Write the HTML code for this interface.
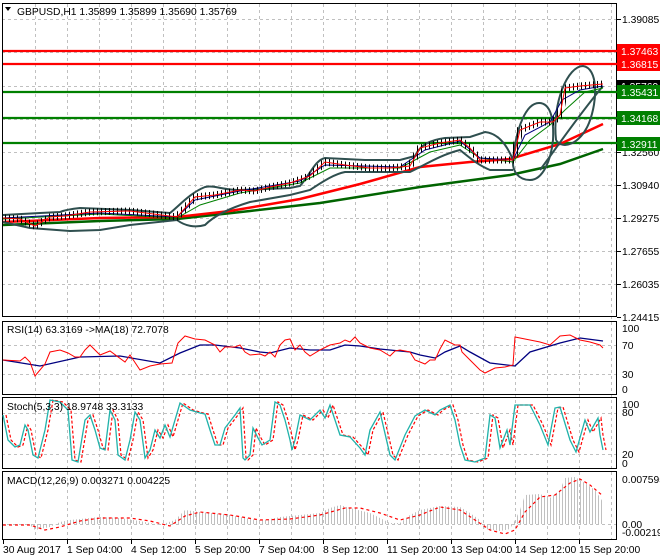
<!DOCTYPE html>
<html><head><meta charset="utf-8"><style>
html,body{margin:0;padding:0;background:#fff;}
svg{display:block;font-family:"Liberation Sans",sans-serif;font-size:10.3px;}
</style></head><body>
<svg width="660" height="560" viewBox="0 0 660 560" xmlns="http://www.w3.org/2000/svg">
<defs>
<pattern id="hp" width="3" height="10" patternUnits="userSpaceOnUse"><rect x="1" y="0" width="1" height="10" fill="#c0c0c0"/></pattern>
<pattern id="cp" width="4" height="10" patternUnits="userSpaceOnUse"><rect x="1" y="0" width="1" height="10" fill="#000"/></pattern>
</defs>
<rect width="660" height="560" fill="#fff"/>
<g stroke="#c0c0c0" stroke-dasharray="3,3" stroke-width="1">
<path d="M35.5 4V540M67.5 4V540M99.5 4V540M131.5 4V540M163.5 4V540M195.5 4V540M227.5 4V540M259.5 4V540M291.5 4V540M323.5 4V540M355.5 4V540M387.5 4V540M419.5 4V540M451.5 4V540M483.5 4V540M515.5 4V540M547.5 4V540M579.5 4V540M611.5 4V540"/>
<path d="M2 19.5H617M2 52.5H617M2 86.5H617M2 119.5H617M2 152.5H617M2 185.5H617M2 218.5H617M2 251.5H617M2 284.5H617"/>
<path d="M2 345.5H617M2 374.5H617M2 413.5H617M2 454.5H617M2 524.5H617"/>
</g>
<g fill="none" stroke="#000" stroke-width="1">
<rect x="2.5" y="3.5" width="614" height="313"/>
<rect x="2.5" y="321.5" width="614" height="73"/>
<rect x="2.5" y="397.5" width="614" height="71"/>
<rect x="2.5" y="471.5" width="614" height="68"/>
</g>
<g stroke-width="2.2">
<path d="M3 51H617" stroke="#ff0000"/>
<path d="M3 64H617" stroke="#ff0000"/>
<path d="M3 92H617" stroke="#008000"/>
<path d="M3 118H617" stroke="#008000"/>
<path d="M3 143H617" stroke="#008000"/>
</g>
<polyline fill="none" stroke="#006400" stroke-width="2.5" points="3,225 100,221 177,219 250,211 320,203 420,187 510,175 560,164 603,149"/>
<polyline fill="none" stroke="#ff0000" stroke-width="2.5" points="3,222 100,218 177,217 230,211 300,199 360,184 420,167 470,162 510,159 560,144 603,124"/>
<g fill="none" stroke="#2f4f4f" stroke-width="2">
<path d="M3 215 L40 213 L60 212 C65 210 70 209 80 208 L130 210 L170 213 C180 205 190 193 205 187 C215 185 222 190 240 190 L290 188 L300 186 C310 175 315 160 325 158 L365 160 L400 160 L415 156 C420 145 430 140 445 138 L470 137 L485 132 C495 133 505 140 513 160"/>
<path d="M3 222 L30 228 L70 231 L100 230 L130 225 L177 220 C185 226 195 228 205 225 C215 215 230 208 250 202 L290 195 L310 190 C325 180 335 174 345 172 L410 172 C425 165 440 155 460 150 C470 158 478 165 490 170 L513 170"/>
<path d="M513 160 C516 128 526 103 539 103 C551 103 554 120 553 140 C551 160 543 180 530 180 C519 180 512 172 513 160"/>
<path d="M556 140 C552 102 568 66 583 66 C598 68 598 100 589 123 C580 145 562 150 556 140"/>
<path d="M540 170 C555 150 575 120 603 86"/>
</g>
<polyline fill="none" stroke="#008000" stroke-width="1" points="3,219 100,214 177,218 200,205 240,193 300,183 330,168 400,168 430,152 460,145 480,158 513,162 530,140 550,125 565,110 585,92 603,88"/>
<polyline fill="none" stroke="#000080" stroke-width="1" points="3,218 100,213 177,217 195,200 240,191 300,181 325,165 400,167 425,150 460,141 480,158 513,160 525,135 550,122 562,100 580,90 603,86"/>
<polyline fill="none" stroke="url(#cp)" stroke-width="7" points="3,218 20,219 35,226 50,217 65,216 90,212 130,211 177,217 195,197 215,195 240,190 255,191 270,187 290,183 310,176 325,162 345,165 370,168 390,168 410,166 420,148 440,143 460,140 470,148 480,160 500,160 513,160 520,130 540,122 553,122 560,115 565,88 580,86 603,84"/>
<polyline fill="none" stroke="#ff0000" stroke-width="1" points="3,218 20,219 35,226 50,217 65,216 90,212 130,211 177,217 195,197 215,195 240,190 255,191 270,187 290,183 310,176 325,162 345,165 370,168 390,168 410,166 420,148 440,143 460,140 470,148 480,160 500,160 513,160 520,130 540,122 553,122 560,115 565,88 580,86 603,84"/>
<polyline fill="none" stroke="#000080" stroke-width="1.3" points="3,360 40,366 80,357 120,356 160,363 180,353 200,345 215,345 240,348 260,352 270,353 290,348 310,350 330,350 345,345 360,346 380,349 410,352 420,355 435,358 445,352 460,346 470,352 490,363 515,366 530,352 560,343 580,338 603,341"/>
<polyline fill="none" stroke="#ff0000" stroke-width="1" points="3,360 20,361 25,357 30,362 35,376 45,364 50,352 60,350 68,353 75,357 80,357 85,350 90,345 100,355 110,351 125,362 130,355 140,370 150,366 160,364 172,363 178,343 185,336 195,339 205,340 215,345 220,352 225,347 235,347 240,345 245,352 250,355 260,354 265,356 270,352 275,357 280,345 285,340 290,339 295,350 300,345 305,352 310,356 320,350 330,345 340,343 345,340 350,342 355,337 360,343 370,348 380,350 390,356 395,351 400,350 410,352 415,360 420,362 425,364 430,360 435,360 440,349 445,340 455,345 460,345 462,352 470,360 480,370 485,373 495,368 505,367 513,365 515,337 530,340 540,342 550,345 560,336 570,335 580,340 590,342 600,345 603,348"/>
<polyline fill="none" stroke="#ff0000" stroke-width="1.2" stroke-dasharray="3,2" transform="translate(3,0)" points="3,415 8,440 15,447 20,445 25,425 28,430 33,455 38,458 45,430 50,400 60,402 68,410 72,460 78,462 85,420 90,415 95,430 100,448 105,450 110,410 115,420 118,455 125,460 130,440 135,412 140,420 145,458 150,450 155,430 160,438 165,425 170,437 180,403 190,410 200,413 205,414 210,430 215,445 220,445 225,428 235,415 240,408 243,458 245,460 250,455 253,428 258,438 262,445 270,440 275,402 280,405 285,420 290,440 292,450 295,440 300,415 310,420 320,410 325,418 330,405 340,435 350,437 360,448 365,455 370,430 380,412 390,455 395,460 405,435 415,416 425,410 435,415 440,410 450,405 455,420 460,445 465,460 475,462 485,458 490,415 495,418 500,448 507,430 510,445 515,405 530,405 540,425 548,445 555,408 560,407 570,440 576,452 585,420 590,432 598,418 600,435 603,450"/>
<polyline fill="none" stroke="#20b2aa" stroke-width="1.3" points="3,415 8,440 15,447 20,445 25,425 28,430 33,455 38,458 45,430 50,400 60,402 68,410 72,460 78,462 85,420 90,415 95,430 100,448 105,450 110,410 115,420 118,455 125,460 130,440 135,412 140,420 145,458 150,450 155,430 160,438 165,425 170,437 180,403 190,410 200,413 205,414 210,430 215,445 220,445 225,428 235,415 240,408 243,458 245,460 250,455 253,428 258,438 262,445 270,440 275,402 280,405 285,420 290,440 292,450 295,440 300,415 310,420 320,410 325,418 330,405 340,435 350,437 360,448 365,455 370,430 380,412 390,455 395,460 405,435 415,416 425,410 435,415 440,410 450,405 455,420 460,445 465,460 475,462 485,458 490,415 495,418 500,448 507,430 510,445 515,405 530,405 540,425 548,445 555,408 560,407 570,440 576,452 585,420 590,432 598,418 600,435 603,450"/>
<polygon fill="url(#hp)" points="3,525 30,525 35,530 50,527 60,522 70,520 80,519 100,517 120,518 140,521 160,525 175,520 185,510 200,512 230,515 260,521 280,517 300,515 320,513 330,508 340,505 350,508 370,513 380,518 390,523 400,523 410,515 420,510 440,506 460,507 470,513 480,520 485,529 500,531 510,529 515,520 520,510 525,495 540,494 550,498 560,490 565,478 575,477 585,483 595,490 603,502 603,524 3,524"/>
<polyline fill="none" stroke="#ff0000" stroke-width="1.2" stroke-dasharray="3,3" points="3,525 30,525 45,530 60,527 80,521 100,518 130,518 150,521 170,526 185,516 200,512 230,515 260,520 290,519 320,515 345,508 360,508 380,513 400,520 420,515 440,507 460,510 475,520 490,530 505,534 515,530 525,512 540,497 555,495 570,483 580,479 590,485 603,496"/>
<path d="M5 7L11 7L8 11Z" fill="#000"/>
<text x="17" y="15" fill="#000">GBPUSD,H1  1.35899 1.35899 1.35690 1.35769</text>
<text x="7" y="333" fill="#000">RSI(14) 63.3169  -&gt;MA(18) 72.7078</text>
<text x="7" y="410" fill="#000">Stoch(5,3,3) 18.9748 33.3133</text>
<text x="7" y="484" fill="#000">MACD(12,26,9) 0.003271 0.004225</text>
<g stroke="#000"><path d="M617 19.5h4M617 152.5h4M617 185.5h4M617 218.5h4M617 251.5h4M617 284.5h4M617 317.5h4"/></g>
<g fill="#000">
<text x="622" y="23">1.39085</text>
<text x="622" y="156">1.32560</text>
<text x="622" y="189">1.30940</text>
<text x="622" y="222">1.29275</text>
<text x="622" y="255">1.27655</text>
<text x="622" y="288">1.26035</text>
<text x="622" y="321">1.24415</text>
<text x="622" y="332">100</text>
<text x="622" y="349">70</text>
<text x="622" y="378">30</text>
<text x="622" y="393">0</text>
<text x="622" y="408">100</text>
<text x="622" y="416">80</text>
<text x="622" y="458">20</text>
<text x="622" y="467">0</text>
<text x="622" y="483">0.007595</text>
<text x="622" y="528">0.00</text>
<text x="622" y="536">-0.002195</text>
</g>
<rect x="617" y="44" width="43" height="14" fill="#ff0000"/><text x="621" y="55" fill="#fff">1.37463</text>
<rect x="617" y="57" width="43" height="14" fill="#ff0000"/><text x="621" y="68" fill="#fff">1.36815</text>
<rect x="617" y="80" width="43" height="12" fill="#000"/><text x="621" y="90" fill="#fff">1.35769</text>
<rect x="617" y="85" width="43" height="14" fill="#008000"/><text x="621" y="96" fill="#fff">1.35431</text>
<rect x="617" y="111" width="43" height="14" fill="#008000"/><text x="621" y="122" fill="#fff">1.34168</text>
<rect x="617" y="137" width="43" height="14" fill="#008000"/><text x="621" y="148" fill="#fff">1.32911</text>
<g stroke="#000"><path d="M3.5 540v4M67.5 540v4M131.5 540v4M195.5 540v4M259.5 540v4M323.5 540v4M387.5 540v4M451.5 540v4M515.5 540v4M579.5 540v4"/></g>
<g fill="#000">
<text x="3" y="553">30 Aug 2017</text>
<text x="67" y="553">1 Sep 04:00</text>
<text x="131" y="553">4 Sep 12:00</text>
<text x="195" y="553">5 Sep 20:00</text>
<text x="259" y="553">7 Sep 04:00</text>
<text x="323" y="553">8 Sep 12:00</text>
<text x="387" y="553">11 Sep 20:00</text>
<text x="451" y="553">13 Sep 04:00</text>
<text x="515" y="553">14 Sep 12:00</text>
<text x="579" y="553">15 Sep 20:00</text>
</g>
</svg>
</body></html>
